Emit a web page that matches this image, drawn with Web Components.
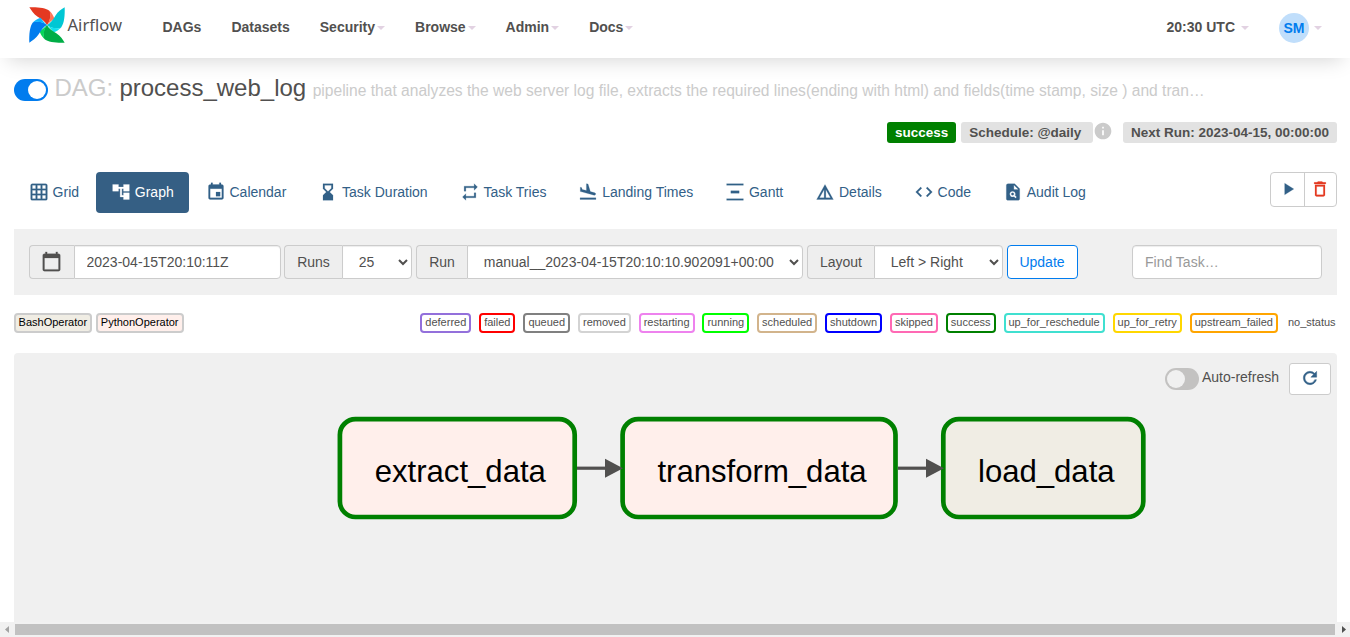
<!DOCTYPE html>
<html lang="en">
<head>
<meta charset="utf-8">
<title>process_web_log - Graph - Airflow</title>
<style>
html, body { margin: 0; height: 100%; overflow: hidden; background: #fff; }
body { font: 14px/20px "Liberation Sans", Arial, sans-serif; color: #51504f; }
</style>
</head>
<body>
<airflow-app></airflow-app>
<script>
const ICONS = {
  grid: 'M20 2H4c-1.1 0-2 .9-2 2v16c0 1.1.9 2 2 2h16c1.1 0 2-.9 2-2V4c0-1.1-.9-2-2-2zM8 20H4v-4h4v4zm0-6H4v-4h4v4zm0-6H4V4h4v4zm6 12h-4v-4h4v4zm0-6h-4v-4h4v4zm0-6h-4V4h4v4zm6 12h-4v-4h4v4zm0-6h-4v-4h4v4zm0-6h-4V4h4v4z',
  graph: 'M22 11V3h-7v3H9V3H2v8h7V8h2v10h4v3h7v-8h-7v3h-2V8h2v3z',
  calendar: 'M17 12h-5v5h5v-5zM16 1v2H8V1H6v2H5c-1.11 0-1.99.9-1.99 2L3 19c0 1.1.89 2 2 2h14c1.1 0 2-.9 2-2V5c0-1.1-.9-2-2-2h-1V1h-2zm3 18H5V8h14v11z',
  duration: 'M18 22l-.01-6L14 12l3.99-4.01L18 2H6v6l4 4-4 3.99V22h12zM8 7.5V4h8v3.5l-4 4-4-4z',
  tries: 'M7 7h10v3l4-4-4-4v3H5v6h2V7zm10 10H7v-3l-4 4 4 4v-3h12v-6h-2v4z',
  landing: 'M2.5 19h19v2h-19v-2zm7.18-5.73l4.35 1.16 5.31 1.42c.8.21 1.62-.26 1.84-1.06.21-.8-.26-1.62-1.06-1.84l-5.31-1.42-2.76-9.02L10.12 2v8.28L5.15 8.95l-.93-2.32-1.45-.39v5.17l1.6.43 5.31 1.43z',
  gantt: 'M22 2v2H2V2h20zM7 10.5v3h10v-3H7zM2 20v2h20v-2H2z',
  details: 'M12 3L2 21h20L12 3zm1 5.92L18.6 19H13V8.92zm-2 0V19H5.4L11 8.92z',
  code: 'M9.4 16.6L4.8 12l4.6-4.6L8 6l-6 6 6 6 1.4-1.4zm5.2 0l4.6-4.6-4.6-4.6L16 6l6 6-6 6-1.4-1.4z',
  audit: 'M14 2H6c-1.1 0-1.99.9-1.99 2L4 20c0 1.1.89 2 1.99 2H18c1.1 0 2-.9 2-2V8l-6-6zm1.04 17.45l-1.88-1.88c-1.33.71-3.01.53-4.13-.59-1.37-1.37-1.37-3.58 0-4.95 1.37-1.37 3.58-1.37 4.95 0 1.12 1.12 1.31 2.8.59 4.13l1.88 1.88-1.41 1.41zM13 9V3.5L18.5 9H13zM11.5 13a1.5 1.5 0 1 0 0 3a1.5 1.5 0 1 0 0-3z',
  today: 'M20 3h-1V1h-2v2H7V1H5v2H4c-1.1 0-2 .9-2 2v16c0 1.1.9 2 2 2h16c1.1 0 2-.9 2-2V5c0-1.1-.9-2-2-2zm0 18H4V8h16v13z',
  play: 'M8 5v14l11-7z',
  trash: 'M6 19c0 1.1.9 2 2 2h8c1.1 0 2-.9 2-2V7H6v12zM8 9h8v10H8V9zm7.5-5l-1-1h-5l-1 1H5v2h14V4z',
  refresh: 'M17.65 6.35A7.958 7.958 0 0 0 12 4c-4.42 0-7.99 3.58-7.99 8s3.57 8 7.99 8c3.73 0 6.84-2.55 7.73-6h-2.08A5.99 5.99 0 0 1 12 18c-3.31 0-6-2.69-6-6s2.69-6 6-6c1.66 0 3.14.69 4.22 1.78L13 11h7V4l-2.35 2.35z',
  info: 'M12 2C6.48 2 2 6.48 2 12s4.48 10 10 10 10-4.48 10-10S17.52 2 12 2zm1 15h-2v-6h2v6zm0-8h-2V7h2v2z'
};

function define(name, render) {
  customElements.define(name, class extends HTMLElement {
    constructor() {
      super();
      this.attachShadow({ mode: 'open' });
    }
    connectedCallback() {
      this.shadowRoot.innerHTML = render(this);
    }
  });
}

define('md-icon', el => `
  <style>
    :host { display: block; flex: none; width: var(--size, 20px); height: var(--size, 20px); }
    svg { display: block; width: 100%; height: 100%; fill: currentColor; stroke: currentColor; stroke-width: var(--bold, 0); }
  </style>
  <svg viewBox="0 0 24 24"><path fill-rule="evenodd" d="${ICONS[el.getAttribute('name')]}"/></svg>`);

define('toggle-switch', el => `
  <style>
    :host { display: block; flex: none; box-sizing: border-box; width: 34px; height: 22px; padding: 2px; border-radius: 11px; background: #c3c2c1; }
    :host([on]) { background: #017cee; }
    i { display: block; width: 18px; height: 18px; border-radius: 50%; background: #f0f0f0; }
    :host([on]) i { margin-left: 12px; background: #fff; }
  </style><i></i>`);

define('nav-item', el => `
  <style>
    :host { display: flex; align-items: center; padding: 0 15px; font-weight: bold; white-space: nowrap; }
    i { width: 0; border: 4px solid transparent; border-top-color: #e2d2e2; border-bottom: 0; margin: 2px 0 0 var(--caret-gap, 2px); }
    :host(:not([menu])) i { display: none; }
  </style><slot></slot><i></i>`);

define('airflow-logo', () => {
  const blade = (angle, dark, light) => `<g transform="rotate(${angle})">
    <path fill="${dark}" d="M-53-53C-30-54-4-52 8-42C13-28 10-12 0 0C-5-10-16-18-28-25C-41-33-47-44-53-53Z"/>
    <path fill="${light}" d="M8-42C15-35 20-27 22-19C15-15 7-7 0 0C9-14 12-28 8-42Z"/></g>`;
  return `
  <style>
    :host { display: block; width: 98px; height: 40px; margin-top: -4px; }
    svg { display: block; }
    text { font: 17px "Noto Sans", "Open Sans", sans-serif; fill: #51504f; }
  </style>
  <svg width="98" height="40" viewBox="0 0 98 40">
    <g transform="translate(18 20) scale(.3333)">
      ${blade(0, '#e43921', '#ff7557')}${blade(90, '#00c7d4', '#11e1ee')}
      ${blade(180, '#00ad46', '#04d659')}${blade(270, '#017cee', '#0cb6ff')}
    </g>
    <text x="38.5" y="26" textLength="54.5" lengthAdjust="spacingAndGlyphs">Airflow</text>
  </svg>`;
});

define('top-bar', () => `
  <style>
    :host { display: flex; align-items: center; height: 58px; box-sizing: border-box; padding: 0 13px 4px 29px; background: #fff; box-shadow: 0 10px 20px -8px rgba(0,0,0,.17); }
    airflow-logo { margin-right: 20.5px; }
    .end { margin-left: auto; display: flex; align-items: center; --caret-gap: 6px; }
    .user { --caret-gap: 5px; }
    b { width: 30px; height: 30px; border-radius: 50%; background: #c0defb; color: #017cee; line-height: 30px; text-align: center; margin: 2px 0 0; }
  </style>
  <airflow-logo></airflow-logo>
  <nav-item>DAGs</nav-item><nav-item>Datasets</nav-item><nav-item menu>Security</nav-item>
  <nav-item menu>Browse</nav-item><nav-item menu>Admin</nav-item><nav-item menu>Docs</nav-item>
  <div class="end"><nav-item menu>20:30 UTC</nav-item><nav-item menu class="user"><b>SM</b></nav-item></div>`);

define('status-label', () => `
  <style>
    :host { display: block; height: 21px; padding: 0 8px; border-radius: 3px; background: #e2e2e2; font-weight: bold; font-size: 13.5px; line-height: 21px; white-space: nowrap; }
    :host([success]) { background: #008000; color: #fff; }
  </style><slot></slot>`);

define('dag-header', () => `
  <style>
    :host { display: block; padding: 14px 0 0; }
    .title { display: flex; align-items: baseline; height: 32px; line-height: 32px; font-size: 24px; white-space: nowrap; }
    toggle-switch { align-self: flex-start; margin: 7px 6.5px 0 0; }
    .muted { color: #cbcbcb; margin-right: 6.2px; }
    .desc { color: #cbcbcb; font-size: 15.6px; margin-left: 6.5px; }
    .labels { display: flex; justify-content: flex-end; margin-top: 18px; height: 21px; }
    .sched { margin-left: 5px; padding-right: 12px; }
    md-icon { --size: 20px; color: #cbcbcb; margin: -1px 9.5px 0 0; }
  </style>
  <div class="title"><toggle-switch on></toggle-switch><span class="muted">DAG:</span><span>process_web_log</span><span class="desc">pipeline that analyzes the web server log file, extracts the required lines(ending with html) and fields(time stamp, size ) and tran…</span></div>
  <div class="labels"><status-label success>success</status-label><status-label class="sched">Schedule: @daily</status-label><md-icon name="info"></md-icon><status-label>Next Run: 2023-04-15, 00:00:00</status-label></div>`);

define('view-tab', el => `
  <style>
    :host { display: flex; align-items: center; gap: 3.9px; height: 41px; box-sizing: border-box; padding: 0 15px 2px; border-radius: 4px; color: #326087; white-space: nowrap; }
    :host([active]) { background: #355f84; color: #fff; }
    md-icon { margin-left: -.2px; margin-right: -.1px; }
    slot { display: block; }
  </style><md-icon name="${el.getAttribute('icon')}"></md-icon><slot></slot>`);

define('view-tabs', () => `
  <style>
    :host { display: flex; gap: 2.15px; margin-top: 29px; height: 41px; --bold: .25; }
    .actions { display: flex; margin-left: auto; box-sizing: border-box; width: 67px; height: 35px; border: 1px solid #ccc; border-radius: 4px; color: #326087; }
    span { flex: 1; display: flex; align-items: center; justify-content: center; padding: 0 0 1px 1px; --size: 20px; }
    span + span { border-left: 1px solid #ccc; color: #e43921; padding-left: 0; }
  </style>
  <view-tab icon="grid">Grid</view-tab><view-tab icon="graph" active>Graph</view-tab>
  <view-tab icon="calendar">Calendar</view-tab><view-tab icon="duration">Task Duration</view-tab>
  <view-tab icon="tries">Task Tries</view-tab><view-tab icon="landing">Landing Times</view-tab>
  <view-tab icon="gantt">Gantt</view-tab><view-tab icon="details">Details</view-tab>
  <view-tab icon="code">Code</view-tab><view-tab icon="audit">Audit Log</view-tab>
  <div class="actions"><span><md-icon name="play"></md-icon></span><span><md-icon name="trash"></md-icon></span></div>`);

define('filter-bar', () => `
  <style>
    :host { display: flex; margin-top: 16px; height: 66px; box-sizing: border-box; padding: 16px 15px; background: #f0f0f0; }
    .group { display: flex; margin-right: 4px; }
    .addon { display: flex; align-items: center; justify-content: center; box-sizing: border-box; border: 1px solid #ccc; border-right: 0; border-radius: 4px 0 0 4px; background: #eee; --size: 21px; --bold: .25; }
    .addon md-icon { margin: -2px 1px 0 0; }
    input, select { box-sizing: border-box; height: 34px; margin: 0; padding: 6px 12px; border: 1px solid #ccc; border-radius: 4px; background: #fff; color: #51504f; font: inherit; box-shadow: inset 0 1px 1px rgba(0,0,0,.075); flex: 1; min-width: 0; }
    input { padding: 6px 11.5px; }
    .group input, select { border-radius: 0 4px 4px 0; }
    select { padding-left: 11.8px; }
    input::placeholder { color: #999; opacity: 1; }
    button { box-sizing: border-box; width: 71px; height: 34px; padding: 0 1px 0 0; border: 1px solid #017cee; border-radius: 4px; background: #fff; color: #017cee; font: inherit; }
    .find { flex: 0 0 190px; margin-left: auto; padding: 6px 12px; }
  </style>
  <div class="group" style="width:252px;margin-right:3px"><span class="addon" style="width:45px"><md-icon name="today"></md-icon></span><input value="2023-04-15T20:10:11Z"></div>
  <div class="group" style="width:128px"><span class="addon" style="width:58px">Runs</span><select><option>25</option></select></div>
  <div class="group" style="width:387px"><span class="addon" style="width:51px">Run</span><select><option>manual__2023-04-15T20:10:10.902091+00:00</option></select></div>
  <div class="group" style="width:196px"><span class="addon" style="width:67px">Layout</span><select><option>Left &gt; Right</option></select></div>
  <button>Update</button>
  <input class="find" placeholder="Find Task…">`);

define('legend-item', el => `
  <style>
    :host { display: block; box-sizing: border-box; height: 20px; padding: 0 3px; border: 2px solid ${el.getAttribute('color')}; border-radius: 4px; font-size: 11px; line-height: 15px; white-space: nowrap; }
  </style><slot></slot>`);

define('state-legend', () => {
  const states = [['deferred', 'mediumpurple'], ['failed', 'red'], ['queued', 'gray'], ['removed', 'lightgrey'], ['restarting', 'violet'], ['running', 'lime'], ['scheduled', 'tan'], ['shutdown', 'blue'], ['skipped', 'hotpink'], ['success', 'green'], ['up_for_reschedule', 'turquoise'], ['up_for_retry', 'gold'], ['upstream_failed', 'orange']];
  return `
  <style>
    :host { display: flex; justify-content: space-between; margin-top: 18px; height: 20px; }
    div { display: flex; gap: 4px; color: #000; }
    .states { gap: 7.9px; color: #51504f; margin-right: -3.6px; }
    .none { margin-left: -3px; }
  </style>
  <div><legend-item color="#ccc" style="background:#f0ede4;padding:0 3.2px 0 2.6px">BashOperator</legend-item><legend-item color="#ccc" style="background:#ffefeb;padding:0 3.2px 0 2.6px">PythonOperator</legend-item></div>
  <div class="states">${states.map(([n, c]) => `<legend-item color="${c}">${n}</legend-item>`).join('')}<legend-item class="none" color="transparent">no_status</legend-item></div>`;
});

define('dag-graph', () => {
  const node = (x, w, fill, label) => `<rect x="${x}" y="66.2" width="${w}" height="97.8" rx="15.6" fill="${fill}" stroke="green" stroke-width="4.7"/><text x="${x + w / 2 + 3}" y="128.7">${label}</text>`;
  const edge = (x1, x2) => `<path d="M${x1} 115.2H${x2 - 16}" stroke="#51504f" stroke-width="3.2"/><path d="M${x2 - 18} 105.8L${x2} 115.2L${x2 - 18} 124.8Z" fill="#51504f"/>`;
  return `
  <style>
    :host { display: block; position: relative; margin-top: 20px; height: 269px; border-radius: 4px 4px 0 0; background: #f0f0f0; }
    svg { display: block; width: 1323px; height: 269px; }
    text { font-size: 31.1px; text-anchor: middle; fill: #000; }
    .tools { position: absolute; top: 10px; right: 6px; display: flex; align-items: flex-start; }
    .tools > span { margin: 4px 10px 0 3px; }
    toggle-switch { margin-top: 5px; }
    .btn { display: flex; align-items: center; justify-content: center; box-sizing: border-box; width: 42px; height: 32px; padding-bottom: 2px; border: 1px solid #ccc; border-radius: 3px; background: #fff; color: #326087; --size: 20px; --bold: .5; }
  </style>
  <svg viewBox="0 0 1323 269">
    ${node(325.9, 234.8, '#ffefeb', 'extract_data')}
    ${node(608.6, 272.9, '#ffefeb', 'transform_data')}
    ${node(929.3, 200, '#f0ede4', 'load_data')}
    ${edge(563, 609)}${edge(884, 930)}
  </svg>
  <div class="tools"><toggle-switch></toggle-switch><span>Auto-refresh</span><div class="btn"><md-icon name="refresh"></md-icon></div></div>`;
});

define('scroll-bar', () => `
  <style>
    :host { display: flex; align-items: center; height: 15px; background: #f1f1f1; }
    svg { display: block; width: 15px; height: 15px; flex: none; }
    i { flex: 1; height: 11px; background: #c1c1c1; }
  </style>
  <svg viewBox="0 0 15 15"><path d="M5 7.5L9 4V11Z" fill="#a3a3a3"/></svg><i></i><svg viewBox="0 0 15 15"><path d="M11 7.5L7 4V11Z" fill="#505050"/></svg>`);

define('airflow-app', () => `
  <style>
    :host { display: flex; flex-direction: column; height: 637px; }
    main { flex: 1; padding: 0 13px 0 14px; }
  </style>
  <top-bar></top-bar>
  <main><dag-header></dag-header><view-tabs></view-tabs><filter-bar></filter-bar><state-legend></state-legend><dag-graph></dag-graph></main>
  <scroll-bar></scroll-bar>`);
</script>
</body>
</html>
